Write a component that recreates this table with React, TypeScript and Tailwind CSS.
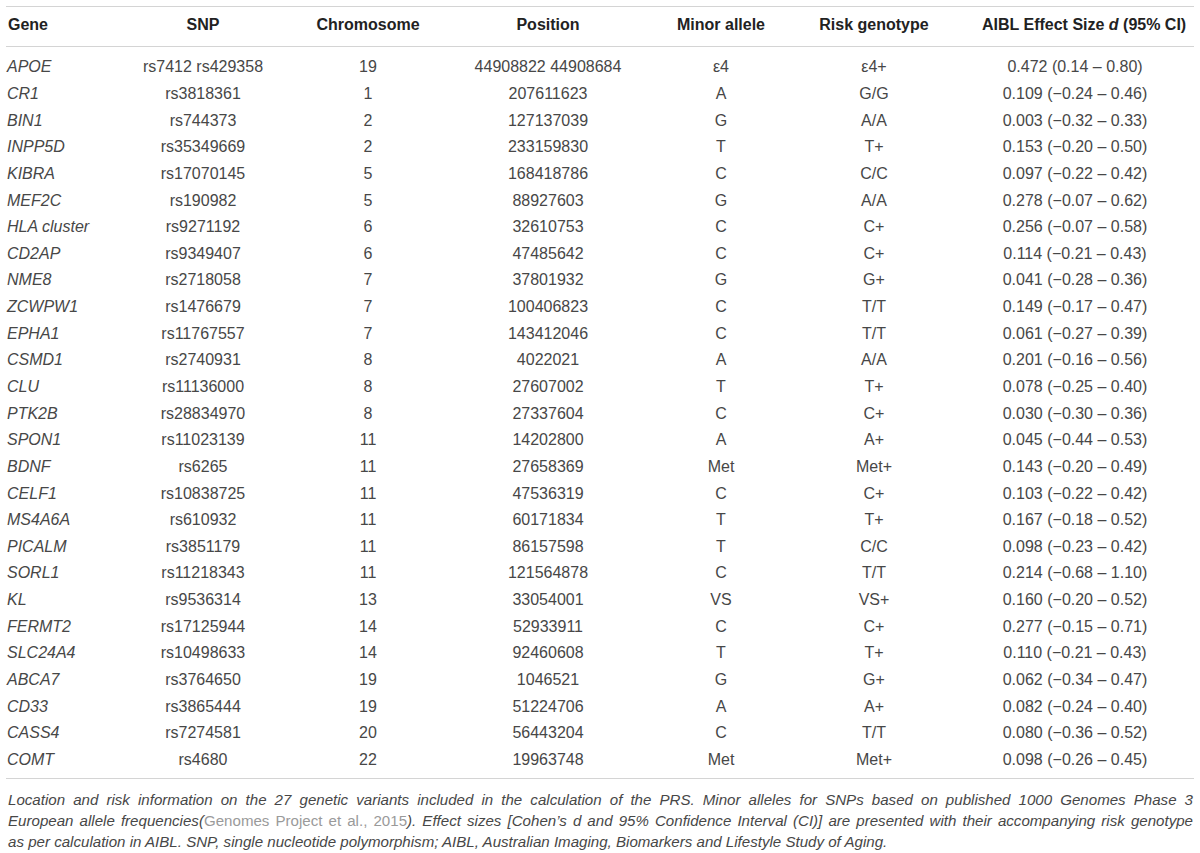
import React from "react";

const rows: string[][] = [
  ["APOE", "rs7412 rs429358", "19", "44908822 44908684", "ε4", "ε4+", "0.472 (0.14 – 0.80)"],
  ["CR1", "rs3818361", "1", "207611623", "A", "G/G", "0.109 (−0.24 – 0.46)"],
  ["BIN1", "rs744373", "2", "127137039", "G", "A/A", "0.003 (−0.32 – 0.33)"],
  ["INPP5D", "rs35349669", "2", "233159830", "T", "T+", "0.153 (−0.20 – 0.50)"],
  ["KIBRA", "rs17070145", "5", "168418786", "C", "C/C", "0.097 (−0.22 – 0.42)"],
  ["MEF2C", "rs190982", "5", "88927603", "G", "A/A", "0.278 (−0.07 – 0.62)"],
  ["HLA cluster", "rs9271192", "6", "32610753", "C", "C+", "0.256 (−0.07 – 0.58)"],
  ["CD2AP", "rs9349407", "6", "47485642", "C", "C+", "0.114 (−0.21 – 0.43)"],
  ["NME8", "rs2718058", "7", "37801932", "G", "G+", "0.041 (−0.28 – 0.36)"],
  ["ZCWPW1", "rs1476679", "7", "100406823", "C", "T/T", "0.149 (−0.17 – 0.47)"],
  ["EPHA1", "rs11767557", "7", "143412046", "C", "T/T", "0.061 (−0.27 – 0.39)"],
  ["CSMD1", "rs2740931", "8", "4022021", "A", "A/A", "0.201 (−0.16 – 0.56)"],
  ["CLU", "rs11136000", "8", "27607002", "T", "T+", "0.078 (−0.25 – 0.40)"],
  ["PTK2B", "rs28834970", "8", "27337604", "C", "C+", "0.030 (−0.30 – 0.36)"],
  ["SPON1", "rs11023139", "11", "14202800", "A", "A+", "0.045 (−0.44 – 0.53)"],
  ["BDNF", "rs6265", "11", "27658369", "Met", "Met+", "0.143 (−0.20 – 0.49)"],
  ["CELF1", "rs10838725", "11", "47536319", "C", "C+", "0.103 (−0.22 – 0.42)"],
  ["MS4A6A", "rs610932", "11", "60171834", "T", "T+", "0.167 (−0.18 – 0.52)"],
  ["PICALM", "rs3851179", "11", "86157598", "T", "C/C", "0.098 (−0.23 – 0.42)"],
  ["SORL1", "rs11218343", "11", "121564878", "C", "T/T", "0.214 (−0.68 – 1.10)"],
  ["KL", "rs9536314", "13", "33054001", "VS", "VS+", "0.160 (−0.20 – 0.52)"],
  ["FERMT2", "rs17125944", "14", "52933911", "C", "C+", "0.277 (−0.15 – 0.71)"],
  ["SLC24A4", "rs10498633", "14", "92460608", "T", "T+", "0.110 (−0.21 – 0.43)"],
  ["ABCA7", "rs3764650", "19", "1046521", "G", "G+", "0.062 (−0.34 – 0.47)"],
  ["CD33", "rs3865444", "19", "51224706", "A", "A+", "0.082 (−0.24 – 0.40)"],
  ["CASS4", "rs7274581", "20", "56443204", "C", "T/T", "0.080 (−0.36 – 0.52)"],
  ["COMT", "rs4680", "22", "19963748", "Met", "Met+", "0.098 (−0.26 – 0.45)"],
];

const grid = "grid grid-cols-[124px_146px_184px_176px_170px_136px_252px]";

export default function App() {
  return (
    <div className="w-[1200px] h-[853px] bg-white px-[6px] pt-[6px] font-['Liberation_Sans',Arial,sans-serif] overflow-hidden">
      <div className={`${grid} h-[41px] items-center border-t border-b border-[#d4d4d4] pb-[3px] text-[16px] font-bold text-[#222]`}>
        <div className="pl-[2px]">Gene</div>
        <div className="text-center">SNP</div>
        <div className="text-center">Chromosome</div>
        <div className="text-center">Position</div>
        <div className="text-center">Minor allele</div>
        <div className="text-center">Risk genotype</div>
        <div className="pl-[40px] whitespace-nowrap">
          AIBL Effect Size <span className="italic">d</span> (95% CI)
        </div>
      </div>
      <div className="pt-[7px] pb-[5px] border-b border-[#d4d4d4] text-[16px] text-[#474747]">
        {rows.map((r) => (
          <div key={r[0]} className={`${grid} h-[26.65px] items-center`}>
            <div className="pl-[1px] italic">{r[0]}</div>
            <div className="text-center">{r[1]}</div>
            <div className="text-center">{r[2]}</div>
            <div className="text-center">{r[3]}</div>
            <div className="text-center">{r[4]}</div>
            <div className="text-center">{r[5]}</div>
            <div className="text-center pl-[14px] whitespace-nowrap">{r[6]}</div>
          </div>
        ))}
      </div>
      <div className="pt-[10px] pl-[2px] pr-[1px] text-[15.1px] leading-[21px] italic text-[#474747] text-justify">
        <div className="[text-align-last:justify]">
          Location and risk information on the 27 genetic variants included in the calculation of the PRS. Minor alleles for SNPs based on published 1000 Genomes Phase 3
        </div>
        <div className="[text-align-last:justify]">
          European allele frequencies(<span className="not-italic text-[#9a9a9a]">Genomes Project et al., 2015</span>). Effect sizes [Cohen’s d and 95% Confidence Interval (CI)] are presented with their accompanying risk genotype
        </div>
        <div>
          as per calculation in AIBL. SNP, single nucleotide polymorphism; AIBL, Australian Imaging, Biomarkers and Lifestyle Study of Aging.
        </div>
      </div>
    </div>
  );
}
